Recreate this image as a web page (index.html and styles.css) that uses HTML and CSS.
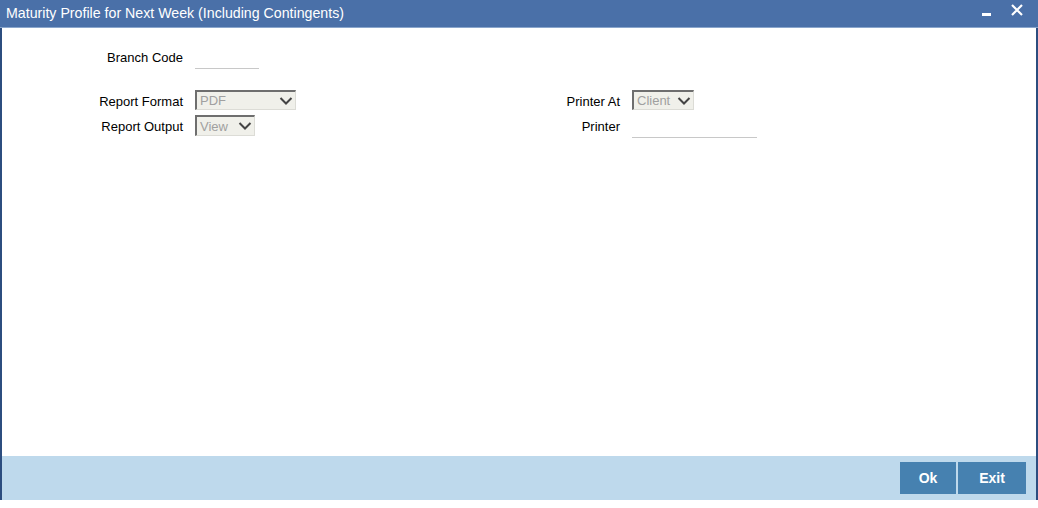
FILE: index.html
```html
<!DOCTYPE html>
<html>
<head>
<meta charset="utf-8">
<link rel="stylesheet" href="styles.css">
</head>
<body>
<div class="window">
  <div class="titlebar">
    <span class="title">Maturity Profile for Next Week (Including Contingents)</span>
    <div class="controls">
      <svg class="ico-min" width="12" height="12" viewBox="0 0 12 12"><rect x="1" y="7" width="9" height="3" fill="#fff"/></svg>
      <svg class="ico-close" width="14" height="14" viewBox="0 0 14 14"><path d="M2 2 L12 12 M12 2 L2 12" stroke="#fff" stroke-width="2.2" fill="none"/></svg>
    </div>
  </div>
  <div class="body">
    <div class="form">
      <label class="lbl r1 c1">Branch Code</label>
      <div class="field r1 c2"><span class="line w64"></span></div>

      <label class="lbl r2 c1">Report Format</label>
      <div class="field r2 c2"><div class="sel w101"><span>PDF</span><svg width="14" height="10" viewBox="0 0 14 10"><path d="M1.5 2 L7 7.5 L12.5 2" stroke="#444" stroke-width="2" fill="none"/></svg></div></div>
      <label class="lbl r2 c3">Printer At</label>
      <div class="field r2 c4"><div class="sel w62"><span>Client</span><svg width="14" height="10" viewBox="0 0 14 10"><path d="M1.5 2 L7 7.5 L12.5 2" stroke="#444" stroke-width="2" fill="none"/></svg></div></div>

      <label class="lbl r3 c1">Report Output</label>
      <div class="field r3 c2"><div class="sel w60"><span>View</span><svg width="14" height="10" viewBox="0 0 14 10"><path d="M1.5 2 L7 7.5 L12.5 2" stroke="#444" stroke-width="2" fill="none"/></svg></div></div>
      <label class="lbl r3 c3">Printer</label>
      <div class="field r3 c4"><span class="line w125"></span></div>
    </div>
  </div>
  <div class="footer">
    <button class="btn ok">Ok</button>
    <button class="btn exit">Exit</button>
  </div>
</div>
</body>
</html>
```

FILE: styles.css
```css
html, body {
  margin: 0;
  padding: 0;
  background: #fff;
}
body {
  font-family: "Liberation Sans", Arial, sans-serif;
  font-size: 13px;
  color: #000;
}
.window {
  width: 1038px;
  height: 500px;
  display: flex;
  flex-direction: column;
}
.titlebar {
  height: 28px;
  background: #4a70a8;
  border-bottom: 1px solid #8aa6cc;
  box-sizing: border-box;
  display: flex;
  align-items: center;
  justify-content: space-between;
  padding: 0 0 0 6px;
  color: #fff;
}
.title {
  font-size: 14.2px;
  margin-top: -2px;
}
.controls {
  display: flex;
  align-items: center;
  gap: 17px;
  padding-right: 14px;
  margin-top: -8px;
}
.ico-min { margin-top: 4px; }
.body {
  flex: 1;
  border-left: 2px solid #2c4d7f;
  border-right: 2px solid #2c4d7f;
  background: #fff;
}
.form {
  display: grid;
  grid-template-columns: 181px 250px 163px 1fr;
  grid-template-rows: 42px 21px 26px;
  column-gap: 12px;
  padding-top: 20px;
}
.lbl {
  text-align: right;
  align-self: center;
  white-space: nowrap;
}
.r1 { grid-row: 1; }
.r2 { grid-row: 2; }
.r3 { grid-row: 3; }
.c1 { grid-column: 1; }
.c2 { grid-column: 2; }
.c3 { grid-column: 3; }
.c4 { grid-column: 4; }
.r1.lbl { align-self: start; margin-top: 2px; }
.r2.lbl { margin-top: 1px; }
.r3.lbl { margin-top: 4px; }
.field {
  display: flex;
  align-items: flex-start;
}
.line {
  display: block;
  height: 20px;
  border-bottom: 1px solid #c8c8c8;
}
.r3 .line { margin-top: 6px; height: 20px; }
.w64 { width: 64px; }
.w125 { width: 125px; }
.sel {
  height: 20px;
  box-sizing: border-box;
  background: #f0f0ea;
  border-top: 2px solid #6e6e6e;
  border-left: 2px solid #6e6e6e;
  border-right: 1px solid #dcdcd6;
  border-bottom: 1px solid #dcdcd6;
  display: flex;
  align-items: center;
  justify-content: space-between;
  padding: 0 2px 0 3px;
  color: #a0a0a0;
  font-size: 13px;
}
.r3 .sel { margin-top: 4px; height: 21px; }
.w101 { width: 101px; }
.w62 { width: 62px; }
.w60 { width: 60px; }
.footer {
  height: 44px;
  background: #bed9ec;
  border-left: 2px solid #2c4d7f;
  border-right: 2px solid #2c4d7f;
  display: flex;
  justify-content: flex-end;
  align-items: flex-start;
  padding: 6px 10px 0 0;
  box-sizing: border-box;
  gap: 2px;
}
.btn {
  height: 32px;
  border: none;
  background: #4681b0;
  color: #fff;
  font-family: "Liberation Sans", Arial, sans-serif;
  font-weight: bold;
  font-size: 14px;
  padding: 0;
  margin: 0;
}
.ok { width: 56px; }
.exit { width: 68px; }
```
